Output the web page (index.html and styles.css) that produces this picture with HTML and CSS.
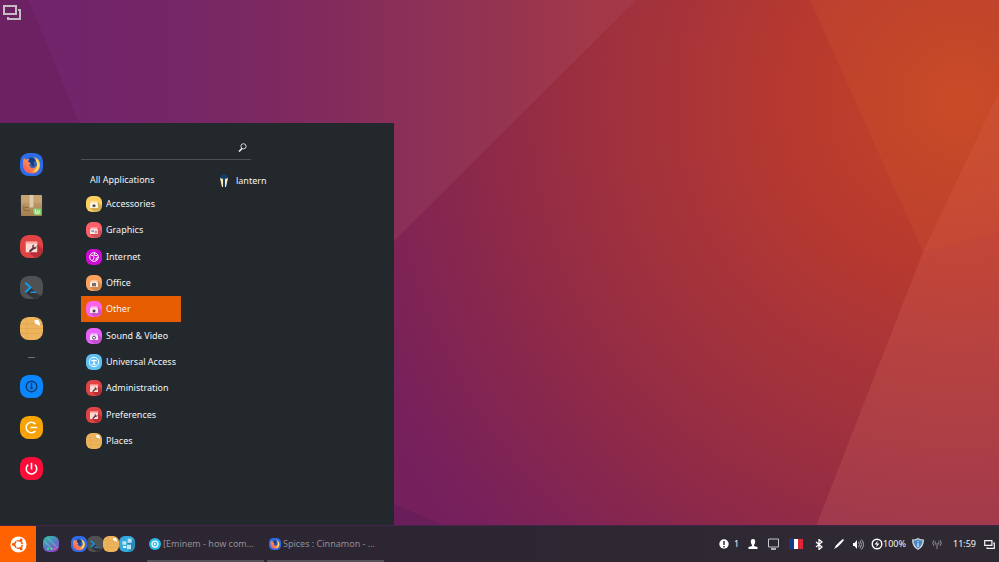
FILE: index.html
```html
<!DOCTYPE html>
<html lang="en">
<head>
<meta charset="utf-8">
<title>Desktop</title>
<link rel="stylesheet" href="styles.css">
</head>
<body>
<svg class="defs" aria-hidden="true">
  <defs>
    <linearGradient id="ffFlame" x1="0" y1="1" x2="1" y2="0"><stop offset="0" stop-color="#ff4b55"/><stop offset=".5" stop-color="#ff8a50"/><stop offset="1" stop-color="#ffe45c"/></linearGradient>
    <linearGradient id="aurora" x1="0" y1="0" x2=".6" y2="1"><stop offset="0" stop-color="#2fc79c"/><stop offset=".5" stop-color="#4f86c0"/><stop offset="1" stop-color="#8a48c8"/></linearGradient>
    <linearGradient id="kraft" x1="0" y1="0" x2="0" y2="1"><stop offset="0" stop-color="#cba878"/><stop offset="1" stop-color="#a37f50"/></linearGradient>
    <symbol id="firefox" viewBox="0 0 24 24">
      <rect width="24" height="24" rx="9" fill="#2d6be8"/>
      <circle cx="12" cy="12.500" r="8" fill="#3a62b8"/>
      <path d="M4 5 L6 7 Q7.500 6 9.500 6.500 L8 9 L11 10.500 L9.500 12.500 Q10.500 16 14 16 Q18 15 18 10.500 Q18 7 14 4 Q21 6 21 13 Q20 21.500 12 21.500 Q3 21 3 12 Q3 8 4 5Z" fill="url(#ffFlame)"/>
      <path d="M16 6 Q21 9 20 15 Q18 20 13 20 Q18 17 18 12Z" fill="#ffdd5c"/>
      <path d="M10 5 Q14 4 16 8 L14 10 L15 14 L12 13 L11 10 L9 9Z" fill="#173a80"/>
    </symbol>
    <symbol id="package" viewBox="0 0 24 24">
      <rect x="1" y="1" width="22" height="22" rx="1" fill="url(#kraft)"/>
      <path d="M1 9 L3 1 H21 L23 9Z" fill="#c7a374"/>
      <path d="M10 1h4v13h-4z" fill="#dfcba5"/>
      <path d="M4 12v5h6M5 14h4" stroke="#866439" fill="none"/>
      <path d="M14 15h8v7h-5q-3 0-3-3z" fill="#8bd070"/>
      <path d="M16 16v4h4v-3M18 17v2" stroke="#e5f8d9" fill="none"/>
    </symbol>
    <symbol id="tools" viewBox="0 0 24 24">
      <rect width="24" height="24" rx="9" fill="#e04343"/>
      <path d="M18 9 L24 15 Q23 22 16 24 L10 19Z" fill="#b92f35"/>
      <path d="M6 7h12v11H6z" fill="#ffd9d4"/><path d="M6 7h12v2H6z" fill="#ffaaa4"/>
      <path d="M9 17 L13 13 Q12 10 15 10 L14 12 L16 13 L17 11 Q18 15 14 15 L11 18Z" fill="#59393b"/>
    </symbol>
    <symbol id="terminal" viewBox="0 0 24 24">
      <rect width="24" height="24" rx="9" fill="#505152"/>
      <path d="M11 12 L17 18 L22 21 Q19 24 15 24 L6 18Z" fill="#333435"/>
      <path d="M5.500 7 L11 12 L5.500 17" fill="none" stroke="#0b9df0" stroke-width="2"/><path d="M11 17h6" stroke="#0b9df0" stroke-width="1.500"/>
    </symbol>
    <symbol id="files" viewBox="0 0 24 24">
      <rect width="24" height="24" rx="9" fill="#edb45c"/>
      <path d="M1 7h22M0 12h24M1 17h22M7 1v22" stroke="#dba24e" fill="none" opacity=".6"/>
      <path d="M15 3 L19 3 Q21 5 21 9 Q15 9 15 3Z" fill="#fff"/>
      <path d="M21 9 Q18 10 15 7Z" fill="#c98d39"/>
    </symbol>
    <symbol id="folder" viewBox="0 0 24 24">
      <path d="M18 9 L24 15 Q23 23 13 24 L6 19Z" fill="#000" opacity=".16"/>
      <path d="M7 8h10v4H7z" fill="#fff" opacity=".55"/><path d="M6 11h12v7H6z" fill="#fff" opacity=".85"/>
    </symbol>
    <symbol id="overlap" viewBox="0 0 18 15">
      <path d="M1 1h12v8H1z" fill="none" stroke="currentColor" stroke-width="2"/>
      <path d="M15 5h2v9H5v-2" fill="none" stroke="currentColor" stroke-width="2"/>
    </symbol>
  </defs>
</svg>

<div class="desktop">
  <svg class="wallpaper" viewBox="0 0 999 562" preserveAspectRatio="none" aria-hidden="true">
    <defs>
      <radialGradient id="sky" gradientUnits="userSpaceOnUse" cx="960" cy="100" r="960">
        <stop offset="0" stop-color="#c54526"/><stop offset=".18" stop-color="#b7392f"/><stop offset=".27" stop-color="#ab3537"/><stop offset=".36" stop-color="#a0313d"/>
        <stop offset=".5" stop-color="#8d2949"/><stop offset=".67" stop-color="#76205c"/><stop offset="1" stop-color="#6c2068"/>
      </radialGradient>
      <linearGradient id="beam" gradientUnits="userSpaceOnUse" x1="28" y1="0" x2="590" y2="0">
        <stop offset="0" stop-color="#70246b"/><stop offset=".25" stop-color="#742667"/><stop offset=".5" stop-color="#802a5e"/><stop offset=".8" stop-color="#923352"/><stop offset="1" stop-color="#a23848"/>
      </linearGradient>
    </defs>
    <rect width="999" height="562" fill="url(#sky)"/>
    <path d="M28 0H636L394 241L260 375L79 123Z" fill="url(#beam)"/>
    <path d="M0 0H28L79 123L90 160H0Z" fill="#6c2162"/>
    <path d="M810 0H999V92L923 252Z" fill="#f08030" opacity=".1"/>
    <path d="M999 92V232L923 252Z" fill="#ff9060" opacity=".17"/>
    <path d="M923 252L999 232V562H802Z" fill="#ff9a80" opacity=".13"/>
    <path d="M394 504L443 525V562H394Z" fill="#501c50" opacity=".3"/>
  </svg>

  <main class="workspace">
    <button class="corner" aria-label="Show all windows"><svg width="18" height="15"><use href="#overlap"/></svg></button>

    <section class="menu" aria-label="Application menu">
      <nav class="favorites" aria-label="Favorites">
        <button aria-label="Firefox"><svg><use href="#firefox"/></svg></button>
        <button aria-label="Software"><svg><use href="#package"/></svg></button>
        <button aria-label="Settings"><svg><use href="#tools"/></svg></button>
        <button aria-label="Terminal"><svg><use href="#terminal"/></svg></button>
        <button aria-label="Files"><svg><use href="#files"/></svg></button>
        <hr>
        <button aria-label="Lock screen"><svg viewBox="0 0 24 24"><rect width="24" height="24" rx="9" fill="#0a86ff"/><circle cx="12" cy="12" r="5.500" fill="none" stroke="#123e6c" stroke-width="1.500"/><path d="M12 8v5" stroke="#123e6c" stroke-width="1.500"/><circle cx="12" cy="13.500" r="1.300" fill="#123e6c"/></svg></button>
        <button aria-label="Log out"><svg viewBox="0 0 24 24"><rect width="24" height="24" rx="9" fill="#f9a406"/><path d="M12 8L2 17M7 21L20 8" stroke="#e49a13" stroke-width="3" opacity=".5"/><path d="M16 8.300A5.500 5.500 0 1 0 16 15.700M11 12h7" fill="none" stroke="#fff" stroke-width="1.700"/></svg></button>
        <button aria-label="Shut down"><svg viewBox="0 0 24 24"><rect width="24" height="24" rx="9" fill="#fa0d38"/><path d="M8.500 8A5.500 5.500 0 1 0 15.500 8M12 6v7" fill="none" stroke="#fff" stroke-width="1.600"/></svg></button>
      </nav>

      <div class="browse">
        <div class="search">
          <input type="text" aria-label="Search applications">
          <svg width="9" height="9" viewBox="0 0 9 9"><circle cx="5.500" cy="3.300" r="2.600" fill="none" stroke="#d5d8da"/><path d="M4 5.500L1 8.500" stroke="#fff" stroke-width="1.500"/></svg>
        </div>
        <div class="columns">
          <div class="categories">
            <button class="all">All Applications</button>
            <ul>
              <li><button><svg viewBox="0 0 24 24"><rect width="24" height="24" rx="9" fill="#fccf61"/><use href="#folder"/><path d="M12 12l3 3-3 2-3-2z" fill="#4b4540"/></svg>Accessories</button></li>
              <li><button><svg viewBox="0 0 24 24"><rect width="24" height="24" rx="9" fill="#fb6069"/><use href="#folder"/><path d="M8 12h4v3H8z" fill="#84a6c5"/><path d="M13 13h4v4h-4z" fill="#e58b91"/></svg>Graphics</button></li>
              <li><button><svg viewBox="0 0 24 24"><rect width="24" height="24" rx="9" fill="#cd0ad4"/><circle cx="12" cy="12" r="6.500" fill="none" stroke="#fff" stroke-width="1.500"/><path d="M7 9l4 1 1 3-2 4M13 6l-1 3 5 1M18 13l-3 1 0 3" fill="none" stroke="#fff" stroke-width="1.500"/></svg>Internet</button></li>
              <li><button><svg viewBox="0 0 24 24"><rect width="24" height="24" rx="9" fill="#fda15d"/><use href="#folder"/><path d="M9 12h6v5H9z" fill="#7c6b5f"/></svg>Office</button></li>
              <li><button class="selected"><svg viewBox="0 0 24 24"><rect width="24" height="24" rx="9" fill="#fb64e9"/><use href="#folder"/><path d="M10 13h4v4h-4z" fill="#55404e"/></svg>Other</button></li>
              <li><button><svg viewBox="0 0 24 24"><rect width="24" height="24" rx="9" fill="#e760fa"/><use href="#folder"/><circle cx="12" cy="14.500" r="2.300" fill="none" stroke="#634b65" stroke-width="1.500"/></svg>Sound &amp; Video</button></li>
              <li><button><svg viewBox="0 0 24 24"><rect width="24" height="24" rx="9" fill="#5fc1f3"/><circle cx="12" cy="12" r="7" fill="none" stroke="#fff" stroke-width="1.500"/><path d="M8 10h8M12 8v5l-2 4M12 13l2 4" fill="none" stroke="#fff" stroke-width="1.700"/></svg>Universal Access</button></li>
              <li><button><svg><use href="#tools"/></svg>Administration</button></li>
              <li><button><svg><use href="#tools"/></svg>Preferences</button></li>
              <li><button><svg><use href="#files"/></svg>Places</button></li>
            </ul>
          </div>
          <div class="results">
            <button><svg viewBox="0 0 10 14"><path d="M1 4Q1 1 5 0Q9 1 9 4L7 13H3Z" fill="#123d6b"/><path d="M1 4L4 5V13H3Z" fill="#ffe9b5"/><path d="M9 4L6 5V13H7Z" fill="#ffe9b5"/></svg>lantern</button>
          </div>
        </div>
      </div>
    </section>
  </main>

  <footer class="panel">
    <button class="start" aria-label="Menu"><svg width="17" height="17" viewBox="0 0 18 18"><circle cx="9" cy="9" r="8.500" fill="#fff"/><circle cx="9" cy="9" r="4" fill="none" stroke="#f25d0a" stroke-width="1.700"/><path d="M9 9L16 9M9 9L5.500 15M9 9L5.500 3" stroke="#fff" stroke-width=".8"/><circle cx="9" cy="9" r="2.800" fill="#fff"/><g fill="#f25d0a"><circle cx="3.500" cy="9" r="1.500"/><circle cx="11.800" cy="4.200" r="1.500"/><circle cx="11.800" cy="13.800" r="1.500"/></g></svg></button>
    <button class="launcher" aria-label="Window list"><svg viewBox="0 0 24 24"><rect width="24" height="24" rx="9" fill="url(#aurora)"/><path d="M2 8L15 21M7 3L22 18" stroke="#6edbc2" stroke-width="2" opacity=".45"/><path d="M6 19h3" stroke="#32e0b0" stroke-width="3"/><path d="M11 19h3" stroke="#45e57d" stroke-width="3"/><path d="M16 19h3" stroke="#e45aa2" stroke-width="3"/></svg></button>
    <div class="launchers">
      <button aria-label="Firefox"><svg><use href="#firefox"/></svg></button>
      <button aria-label="Terminal"><svg><use href="#terminal"/></svg></button>
      <button aria-label="Files"><svg><use href="#files"/></svg></button>
      <button aria-label="Control center"><svg viewBox="0 0 24 24"><rect width="24" height="24" rx="9" fill="#34a9db"/><path d="M12 12l8-8q4 4 4 9-1 8-9 11z" fill="#2788b7"/><path d="M5 8h6v5H5zM13 4h6v6h-6zM12 13h6v7h-6z" fill="#b9e5f5"/><path d="M6 15h5v3H6z" fill="#e9f8fc"/></svg></button>
    </div>
    <div class="tasks">
      <button><svg viewBox="0 0 24 24"><circle cx="12" cy="12" r="12" fill="#27b9e9"/><circle cx="12" cy="12" r="6" fill="none" stroke="#f5fcff" stroke-width="2.500"/><path d="M10 9l5 3-5 3z" fill="#fff"/></svg>[Eminem - how com...</button>
      <button><svg><use href="#firefox"/></svg>Spices : Cinnamon - ...</button>
    </div>
    <div class="tray">
      <button class="notices" aria-label="1 notification"><svg width="10" height="10" viewBox="0 0 10 10"><circle cx="5" cy="5" r="4.700" fill="#fff"/><path d="M5 2v4M5 7v1.500" stroke="#302b33" stroke-width="1.500"/></svg>1</button>
      <button class="slot small" aria-label="User"><svg width="10" height="10" viewBox="0 0 10 10"><path d="M5 0Q7.500 0 7.200 3Q7 5 6 6L6 7L9.500 8V10H.5V8L4 7V6Q3 5 2.800 3Q2.500 0 5 0Z" fill="#fff"/></svg></button>
      <button class="slot large" aria-label="Display"><svg width="11" height="12" viewBox="0 0 11 12"><path d="M.5 1h10v8H.5z" fill="none" stroke="#c7c5c9"/><path d="M3 11h5" stroke="#ddd" stroke-width="1.500"/></svg></button>
      <button class="slot wide" aria-label="Keyboard layout: French"><svg width="14" height="10" viewBox="0 0 14 10"><path d="M0 0h5v10H0z" fill="#173a88"/><path d="M5 0h4v10H5z" fill="#fff"/><path d="M9 0h5v10H9z" fill="#de2635"/></svg></button>
      <button class="slot large" aria-label="Bluetooth"><svg width="8" height="11" viewBox="0 0 8 11"><path d="M1 3L7 8L4 10.500V.5L7 3L1 8" fill="none" stroke="#fff" stroke-width="1.300"/></svg></button>
      <button class="slot small" aria-label="Color picker"><svg width="10" height="10" viewBox="0 0 10 10"><path d="M0 10L2 6.500Q6 2 9 0L10 1Q8 4 3.500 8Z" fill="#fff"/></svg></button>
      <button class="slot" aria-label="Sound"><svg width="11" height="11" viewBox="0 0 11 11"><path d="M0 4h1.500L4 1v9L1.500 7H0z" fill="#fff"/><path d="M5.500 3q2 2.500 0 5M7 1.500q3 4 0 8M8.500 .5q4 5 0 10" fill="none" stroke="#aaa6ac"/></svg></button>
      <button class="battery" aria-label="Battery 100%"><svg width="12" height="12" viewBox="0 0 12 12"><circle cx="6" cy="6" r="4.800" fill="none" stroke="#fff" stroke-width="1.400"/><path d="M7 2.500L3.500 6.500H6L5 9.500L8.500 5.500H6Z" fill="#fff"/></svg>100%</button>
      <button class="slot small" aria-label="Updates"><svg width="12" height="12" viewBox="0 0 12 12"><path d="M6 0Q8.500 1.500 12 1.500Q12 9 6 12Q0 9 0 1.500Q3.500 1.500 6 0Z" fill="#d7dadd"/><path d="M6 1.300Q8 2.500 10.700 2.600Q10 8.500 6 10.700Q2 8.500 1.300 2.600Q4 2.500 6 1.300Z" fill="#4886c5"/><path d="M6 3v1M6 5v4" stroke="#fff" stroke-width="1"/></svg></button>
      <button class="slot" aria-label="Network"><svg width="10" height="10" viewBox="0 0 10 10"><path d="M2 1Q-.5 4 2 7M3.500 2.500Q2.500 4 3.500 5.500M8 1Q10.500 4 8 7M6.500 2.500Q7.500 4 6.500 5.500M5 4v6" fill="none" stroke="#918d94"/></svg></button>
      <time class="clock" datetime="11:59">11:59</time>
      <button aria-label="Workspaces"><svg width="11" height="9"><use href="#overlap"/></svg></button>
    </div>
  </footer>
</div>
</body>
</html>
```

FILE: styles.css
```css
* {
  box-sizing: border-box;
}

body {
  margin: 0;
  font-family: "Noto Sans", sans-serif;
  font-size: 9px;
  line-height: 16px;
  color: #f2f3f3;
}

button,
input {
  margin: 0;
  padding: 0;
  border: 0;
  background: none;
  color: inherit;
  font: inherit;
}

button {
  display: flex;
  align-items: center;
  white-space: nowrap;
}

svg {
  flex: none;
}

.defs {
  position: absolute;
  width: 0;
  height: 0;
}

.desktop {
  position: relative;
  display: flex;
  flex-direction: column;
  min-height: 100vh;
  overflow: hidden;
}

.wallpaper {
  position: absolute;
  inset: 0;
  z-index: -1;
  width: 100%;
  height: 100%;
}

.workspace {
  flex: 1;
  display: flex;
  flex-direction: column;
  justify-content: space-between;
  align-items: flex-start;
}

.corner {
  padding: 5px 3px;
  color: #c5bcc6;
}

.menu {
  display: flex;
  width: 394px;
  padding: 30px 0 45px 20px;
  background: #23282c;
}

.favorites {
  display: flex;
  flex-direction: column;
  align-items: center;
  gap: 18px;
  margin-right: 38px;
}

.favorites svg {
  width: 23px;
  height: 23px;
}

.favorites hr {
  width: 7px;
  height: 1px;
  margin: -1px 0;
  border: 0;
  background: #6d7174;
}

.browse {
  flex: 1;
}

.search {
  display: flex;
  align-items: center;
  width: 170px;
  height: 24px;
  margin-top: -17px;
  padding: 0 4px 0 0;
  border-bottom: 1px solid #4c5156;
}

.search input {
  flex: 1;
  min-width: 0;
  outline: none;
}

.columns {
  display: flex;
  gap: 38px;
  padding-top: 9px;
}

.categories {
  width: 100px;
}

.all {
  height: 22px;
  padding-left: 9px;
}

.categories ul {
  display: grid;
  grid-auto-rows: 1fr;
  min-height: 263px;
  margin: 0;
  padding: 0;
  list-style: none;
}

.categories li {
  display: flex;
}

.categories li button {
  flex: 1;
  gap: 4px;
  padding: 0 5px;
}

.categories li svg {
  width: 16px;
  height: 16px;
}

.categories .selected {
  background: #e65c00;
}

.results button {
  gap: 7px;
  height: 24px;
}

.results svg {
  width: 10px;
  height: 14px;
}

.panel {
  display: flex;
  min-height: 37px;
  border-top: 1px solid #45234b;
  background: linear-gradient(90deg, #2b2733, #2c2632 40%, #2f2a32);
}

.start {
  justify-content: center;
  width: 36px;
  background: #ff6200;
}

.launcher {
  padding: 0 12px 0 7px;
}

.launcher svg,
.launchers svg {
  width: 16px;
  height: 16px;
}

.launchers,
.tasks,
.tray {
  display: flex;
}

.tasks {
  gap: 3px;
  margin-left: 12px;
}

.tasks button {
  gap: 2px;
  width: 117px;
  padding: 2px 2px 0;
  border-bottom: 2px solid #56525b;
  color: #918f95;
}

.tasks svg {
  width: 12px;
  height: 12px;
}

.tray {
  align-items: center;
  gap: 6px;
  margin-left: auto;
  padding-right: 4px;
}

.slot {
  justify-content: center;
  width: 14px;
}

.small {
  width: 12px;
}

.large {
  width: 16px;
}

.wide {
  width: 18px;
}

.notices {
  gap: 5px;
  padding-right: 2px;
}

.clock {
  padding: 0 2px 0 3px;
}
```
